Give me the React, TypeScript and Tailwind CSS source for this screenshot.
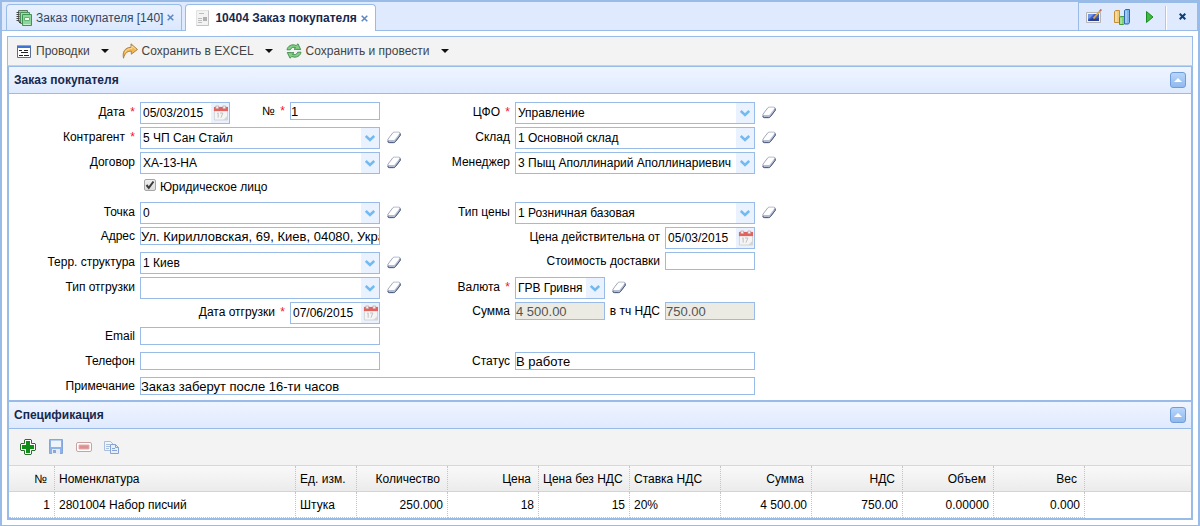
import React, {useId, useState} from 'react';
import clsx from 'clsx';

type ControlProps = {
  label: string;
  required?: boolean;
  labelClass?: string;
};

type Column = {
  title: string;
  value: string;
  width: string;
  align?: 'left' | 'right';
};

const COLUMNS: Column[] = [
  {title: '№', value: '1', width: 'w-[46px]', align: 'right'},
  {title: 'Номенклатура', value: '2801004 Набор писчий', width: 'w-[241px]'},
  {title: 'Ед. изм.', value: 'Штука', width: 'w-[61px]'},
  {title: 'Количество', value: '250.000', width: 'w-[91px]', align: 'right'},
  {title: 'Цена', value: '18', width: 'w-[91px]', align: 'right'},
  {title: 'Цена без НДС', value: '15', width: 'w-[91px]', align: 'right'},
  {title: 'Ставка НДС', value: '20%', width: 'w-[91px]'},
  {title: 'Сумма', value: '4 500.00', width: 'w-[91px]', align: 'right'},
  {title: 'НДС', value: '750.00', width: 'w-[91px]', align: 'right'},
  {title: 'Объем', value: '0.00000', width: 'w-[91px]', align: 'right'},
  {title: 'Вес', value: '0.000', width: 'w-[91px]', align: 'right'},
];

/* ---------- icons ---------- */

const Svg: React.FC<{children: React.ReactNode; className?: string}> = ({
  children,
  className = 'size-4',
}) => (
  <svg viewBox="0 0 16 16" className={clsx('shrink-0', className)} aria-hidden="true">
    {children}
  </svg>
);

const BooksIcon = () => (
  <Svg>
    <path d="M2.500 .5h9v11h-9z" fill="#a9c9b0" stroke="#5a7a62" />
    <path d="M4.500 2.500h9v11h-9z" fill="#a5dcae" stroke="#4d8f5b" />
    <path d="M6.500 4.500h9v11h-9z" fill="#8ed69a" stroke="#3f9453" />
    <path d="M8.500 7.500h5v3h-5z" fill="#f4fcf5" stroke="#62b572" />
    <path d="M7.500 14.500h7" stroke="#c6efcc" />
    <path d="M.5 2.500h3M.5 4.500h3M.5 6.500h3M.5 8.500h3M.5 10.500h3M3 12.500h2" stroke="#444" />
  </Svg>
);

const DocIcon = () => (
  <Svg>
    <path d="M1.500 .5h12v15h-12z" fill="#f3f3f3" stroke="#e2e2e2" />
    <path d="M1.500 15.500h12V.5" fill="none" stroke="#c4c4c4" />
    <path d="M4 3.500h5M3 8.500h4M3 10.500h4M3 12.500h4" stroke="#bdbdbd" />
    <path d="M8 7h4v4H8z" fill="#b0b0b0" />
  </Svg>
);

const FormIcon = () => (
  <Svg>
    <path d="M1.500 2.500h13v12h-13z" fill="#fff" stroke="#5b6f93" />
    <path d="M1 2h14v3H1z" fill="#3f74cf" />
    <path d="M1 2h14v1H1z" fill="#7ea7ea" />
    <path d="M3 7.500h3M8 7.500h4M5 9.500h7M3 12.500h4M8 12.500h5" stroke="#222" />
  </Svg>
);

const ExportIcon = () => (
  <Svg>
    <path
      d="M1.500 15.200C.2 9 2.800 4.500 9 4.300V.8L15.500 6.500 9.300 11.200V8.200C5.500 8 2.800 10 1.500 15.200z"
      fill="#f2b653"
      stroke="#a87a3c"
      strokeWidth=".9"
      strokeLinejoin="round"
    />
    <path d="M3 9.500C4.300 6.600 6.500 5.600 10 5.500V3l3.800 3.400" fill="none" stroke="#fbdc9c" />
  </Svg>
);

const RefreshIcon = () => (
  <Svg>
    <path
      d="M1 6.800C1.500 3 6 .6 10.200 2.500L12 .8l2.700 5.700-6.700-.2 1.700-1.600C7.500 3.700 5.200 4.500 4.300 6.800z"
      fill="#83cf86"
      stroke="#3d8a49"
      strokeWidth=".9"
      strokeLinejoin="round"
    />
    <path
      d="M15 9.200c-.5 3.800-5 6.200-9.200 4.300L4 15.200 1.300 9.500l6.700.2-1.700 1.600c2.200 1 4.500.2 5.400-2.100z"
      fill="#83cf86"
      stroke="#3d8a49"
      strokeWidth=".9"
      strokeLinejoin="round"
    />
  </Svg>
);

const PictureIcon = () => (
  <Svg>
    <path d="M.5 3.500h14v10H.5z" fill="#f4f4f4" stroke="#b5b5b5" />
    <path d="M2 5h11v7H2z" fill="#3d5fc4" />
    <path d="M2 5h6l-4 4-2 1z" fill="#7697e6" />
    <path d="M2 12l4-3 3 1 4-1v3z" fill="#2a3f91" />
    <path d="M7.500 9.500L14.500 1.500" stroke="#e3a43a" strokeWidth="1.800" />
    <path d="M14 2l1.300-1.500" stroke="#c06b5c" strokeWidth="1.800" />
  </Svg>
);

const ChartIcon = () => (
  <Svg>
    <path d="M.5 2.500l1-1h4v11l-1 1h-4z" fill="#f4cb78" stroke="#c48e34" />
    <path d="M5.500 8.500l1-1h4v7l-1 1h-4z" fill="#7fd374" stroke="#449c3d" />
    <path d="M10.500 1.500l1-1h4v13l-1 1.500h-4z" fill="#7db4ee" stroke="#2f69ad" />
    <path d="M2 3v10M7 9v6M12 2v12" stroke="#fff" strokeOpacity=".6" />
  </Svg>
);

const PlayIcon = () => (
  <Svg>
    <path d="M4.500 2.500v11L11 8z" fill="#3dbb3d" stroke="#1c8a24" strokeLinejoin="round" />
  </Svg>
);

const PlusIcon = () => (
  <Svg>
    <path
      d="M5 .5h6L11.500 1v3.500H15l.5.5v6l-.5.5h-3.500V15l-.5.5H5l-.5-.5v-3.500H1L.5 11V5L1 4.500h3.500V1z"
      fill="#fff"
      stroke="#2c6e2c"
    />
    <path d="M6 2h4v4h4v4h-4v4H6v-4H2V6h4z" fill="#0f8f16" />
  </Svg>
);

const DiskIcon = () => (
  <Svg>
    <path d="M1.500 .5h13v14h-13z" fill="#8fb2e8" stroke="#84a6dc" />
    <path d="M3 1h10v7H3z" fill="#eef4fc" />
    <path d="M3 1h10v1H3z" fill="#b9cfef" />
    <path d="M4 10h8v5H4z" fill="#e6ecf5" />
    <path d="M5 11h3v3H5z" fill="#8fa6cf" />
  </Svg>
);

const MinusIcon = () => (
  <Svg>
    <rect x=".5" y="3.500" width="15" height="9" rx="1.500" fill="#fff" stroke="#c9a3a3" />
    <path d="M3 6h10v4H3z" fill="#de9090" stroke="#e5aaaa" />
  </Svg>
);

const CopyIcon = () => (
  <Svg>
    <path d="M.5 2.500h6l3 3v6h-9z" fill="#f1f6fd" stroke="#a9bede" />
    <path d="M2 5.500h4M2 7.500h4M2 9.500h3" stroke="#a9bede" />
    <path d="M6.500 5.500h5l3 3v6h-8z" fill="#e8f0fb" stroke="#86a3d3" />
    <path d="M11.500 5.500v3h3M8 9.500h3M8 11.500h5" fill="none" stroke="#86a3d3" />
  </Svg>
);

const EraserIcon = () => (
  <svg viewBox="0 0 14 13" className="h-[13px] w-3.5" aria-hidden="true">
    <path
      d="M.9 8.300L5.700 1.900Q6.300 1.200 7.200 1.200h4.600q1.400 0 1.400 1.400v1.800L8.400 10.700q-.7.900-1.800.9H2.300Q.9 11.600.9 10.200z"
      fill="#b4bdd2"
      stroke="#8a95b0"
      strokeWidth=".8"
    />
    <path d="M1.400 8.300L6.200 2q.4-.5 1-.5h4.700q1 .1.500.9L7.800 8.500q-.5.600-1.300.6H2Q1.100 9 1.400 8.300z" fill="#fff" />
    <path
      d="M.9 10.200q0 1.400 1.400 1.400h4.300q1.100 0 1.800-.9l4.800-6.300V2.600"
      fill="none"
      stroke="#4c587a"
      strokeWidth="1"
    />
  </svg>
);

const CalendarIcon = () => (
  <Svg className="h-4 w-[15px]">
    <path d="M1.500 3.500h14v12h-14z" fill="#f5f5f5" stroke="#d2d2d2" />
    <path d="M1 1.500h15V6H1z" fill="#e2625e" />
    <path d="M3 .5h3v3H3zM10.500 .5h3v3h-3z" fill="#f2f2f2" stroke="#b88" strokeWidth=".6" />
    <path d="M4.500 8.500l1-.7V13M7.500 8h3L8.500 13" fill="none" stroke="#bdbdbd" />
    <path d="M11 15.500l4.500-4.500v4.500z" fill="#d5d5d5" />
  </Svg>
);

const CaretIcon = () => (
  <svg viewBox="0 0 8 4" className="h-1 w-2" aria-hidden="true">
    <path d="M0 0h8L4 4z" fill="#111" />
  </svg>
);

const CloseIcon: React.FC<{dark?: boolean}> = ({dark}) => (
  <svg viewBox="0 0 7 7" className="size-[7px]" aria-hidden="true">
    <path
      d="M.7 .7L6.300 6.300M6.300 .7L.7 6.300"
      stroke={dark ? '#0b3f7c' : '#5b86c4'}
      strokeWidth={dark ? 2 : 1.500}
    />
  </svg>
);

/* ---------- form controls ---------- */

const Label: React.FC<ControlProps & {htmlFor: string}> = ({
  label,
  required,
  labelClass,
  htmlFor,
}) => (
  <label
    htmlFor={htmlFor}
    className={clsx('pr-[5px] text-right leading-5 whitespace-nowrap', labelClass)}
  >
    {label}
    {required && <span className="pl-0.5 text-[#f0142f]"> *</span>}
  </label>
);

const TextField: React.FC<
  ControlProps & {value?: string; width: string; disabled?: boolean}
> = ({value = '', width, disabled, ...rest}) => {
  const id = useId();
  return (
    <>
      <Label {...rest} labelClass={clsx('leading-[18px]!', rest.labelClass)} htmlFor={id} />
      <input
        id={id}
        type="text"
        defaultValue={value}
        disabled={disabled}
        className={clsx(
          'h-[18px] border border-[#99bbe8] text-[13px] leading-4 outline-none',
          disabled ? 'bg-[#ebebe4] text-[#545454]' : 'bg-white',
          width
        )}
      />
    </>
  );
};

const DateField: React.FC<ControlProps & {value: string}> = ({value, ...rest}) => {
  const id = useId();
  return (
    <>
      <Label {...rest} htmlFor={id} />
      <div className="flex h-[22px] w-[90px] border border-[#99bbe8] bg-white">
        <input id={id} type="text" defaultValue={value} className="w-0 grow pl-0.5 outline-none" />
        <button
          type="button"
          aria-label="Календарь"
          className="flex w-[18px] items-center justify-center bg-[#ebf2ff]"
        >
          <CalendarIcon />
        </button>
      </div>
    </>
  );
};

const ComboField: React.FC<ControlProps & {value: string; width: string}> = ({
  value,
  width,
  ...rest
}) => {
  const id = useId();
  const [selected, setSelected] = useState(value);
  return (
    <>
      <Label {...rest} htmlFor={id} />
      <div className={clsx('relative h-[22px] border border-[#99bbe8] bg-white', width)}>
        <select
          id={id}
          value={selected}
          onChange={event => setSelected(event.target.value)}
          className="h-5 w-full appearance-none overflow-hidden pr-[18px] pl-0.5 leading-5 outline-none"
        >
          <option value={value}>{value}</option>
          {value !== '' && <option value="" />}
        </select>
        <span className="pointer-events-none absolute inset-y-0 right-0 flex w-[18px] items-center justify-center bg-[#ebf2ff]">
          <svg viewBox="0 0 10 7" className="h-[7px] w-2.5" aria-hidden="true">
            <path d="M.8 1L5 5l4.200-4" fill="none" stroke="#72baf0" strokeWidth="2.500" />
          </svg>
        </span>
      </div>
      <button
        type="button"
        aria-label="Очистить"
        onClick={() => setSelected('')}
        className="ml-[7px] flex h-5 w-3.5 items-center"
      >
        <EraserIcon />
      </button>
    </>
  );
};

const FormRow: React.FC<{left?: React.ReactNode; right?: React.ReactNode}> = ({
  left,
  right,
}) => (
  <div className="flex h-[22px] items-start">
    <div className="flex w-[392px] shrink-0 items-start">{left}</div>
    {right && <div className="flex items-start">{right}</div>}
  </div>
);

const PanelHeader: React.FC<{title: string; onToggle: () => void}> = ({title, onToggle}) => (
  <div className="flex h-[27px] items-center justify-between border-b border-[#99bbe8] bg-linear-to-b from-[#eff5ff] to-[#dfeafe] px-[5px]">
    <h2 className="font-bold text-[#15284f]">{title}</h2>
    <button
      type="button"
      aria-label="Свернуть"
      onClick={onToggle}
      className="flex size-4 items-center justify-center rounded-[3px] border border-[#6f9dd9] bg-linear-to-b from-[#b9d6fa] to-[#8fb9ee]"
    >
      <svg viewBox="0 0 8 4" className="h-1 w-2" aria-hidden="true">
        <path d="M0 4h8L4 0z" fill="#fff" />
      </svg>
    </button>
  </div>
);

const ToolbarButton: React.FC<{icon: React.ReactNode; text: string}> = ({icon, text}) => (
  <button type="button" className="flex items-center text-[#444]">
    {icon}
    <span className="pr-[11px] pl-1">{text}</span>
    <CaretIcon />
  </button>
);

const L = 'w-[131px]';
const R = 'w-[114px]';
const INNER = 'w-[60px]';

const App: React.FC = () => {
  const [orderOpen, setOrderOpen] = useState(true);
  const [specOpen, setSpecOpen] = useState(true);

  return (
    <div className="border-2 border-b border-[#99bbe8] bg-white font-['Liberation_Sans',Arial,sans-serif] text-[12px] leading-4 text-black">
      {/* tabs */}
      <div className="flex h-[29px] items-stretch border-b border-[#99bbe8] bg-[#dfeaff]">
        <div role="tablist" className="flex grow items-stretch gap-[3px] pt-0.5 pl-1">
          <div className="flex items-center rounded-t border border-b-0 border-[#99bbe8] bg-linear-to-b from-[#e9f1ff] to-[#dbe8fd] pr-[7px] pl-[9px]">
            <button type="button" role="tab" className="flex items-center gap-1 text-[#33465f]">
              <BooksIcon />
              Заказ покупателя [140]
            </button>
            <button type="button" aria-label="Закрыть" className="pl-1">
              <CloseIcon />
            </button>
          </div>
          <div className="-mb-px flex items-center rounded-t border border-b-0 border-[#99bbe8] bg-white pr-[7px] pl-[9px]">
            <button
              type="button"
              role="tab"
              aria-selected="true"
              className="flex items-center gap-1 font-bold text-[#15284f]"
            >
              <DocIcon />
              10404 Заказ покупателя
            </button>
            <button type="button" aria-label="Закрыть" className="pl-1">
              <CloseIcon />
            </button>
          </div>
        </div>
        <div className="flex items-center border border-b-0 border-[#99bbe8] pl-[7px]">
          <button type="button" aria-label="Оформление" className="pr-3">
            <PictureIcon />
          </button>
          <button type="button" aria-label="Отчеты" className="pr-3">
            <ChartIcon />
          </button>
          <button type="button" aria-label="Выполнить" className="pr-[7px]">
            <PlayIcon />
          </button>
          <span className="mt-0.5 h-6 w-0.5 border-r border-l border-r-white border-l-[#c4c4c4]" />
          <button type="button" aria-label="Закрыть окно" className="pr-[11px] pl-3">
            <CloseIcon dark />
          </button>
        </div>
      </div>

      <main className="p-[5px]">
        <div className="flex h-[30px] items-center gap-[13px] border border-[#99bbe8] border-b-[#d0d0d0] bg-[#f3f3f3] pl-2">
          <ToolbarButton icon={<FormIcon />} text="Проводки" />
          <ToolbarButton icon={<ExportIcon />} text="Сохранить в EXCEL" />
          <ToolbarButton icon={<RefreshIcon />} text="Сохранить и провести" />
        </div>

        <section className="border-x-2 border-t border-[#99bbe8]">
          <PanelHeader title="Заказ покупателя" onToggle={() => setOrderOpen(!orderOpen)} />
          {orderOpen && (
            <form className="flex flex-col gap-[3px] pt-2 pb-px">
              <FormRow
                left={
                  <>
                    <DateField label="Дата" required labelClass={L} value="05/03/2015" />
                    <TextField label="№" required labelClass={INNER} width="w-[90px]" value="1" />
                  </>
                }
                right={
                  <ComboField label="ЦФО" required labelClass={R} width="w-[240px]" value="Управление" />
                }
              />
              <FormRow
                left={
                  <ComboField
                    label="Контрагент"
                    required
                    labelClass={L}
                    width="w-[240px]"
                    value="5 ЧП Сан Стайл"
                  />
                }
                right={
                  <ComboField label="Склад" labelClass={R} width="w-[240px]" value="1 Основной склад" />
                }
              />
              <FormRow
                left={<ComboField label="Договор" labelClass={L} width="w-[240px]" value="ХА-13-НА" />}
                right={
                  <ComboField
                    label="Менеджер"
                    labelClass={R}
                    width="w-[240px]"
                    value="3 Пыщ Аполлинарий Аполлинариевич"
                  />
                }
              />
              <FormRow
                left={
                  <label className="ml-[135px] flex items-start gap-1 leading-5">
                    <input
                      type="checkbox"
                      defaultChecked
                      className="peer mt-0.5 size-3 appearance-none rounded-xs border border-[#a6a6a6] bg-linear-to-b from-[#f0f0f0] to-[#dcdcdc]"
                    />
                    <svg
                      viewBox="0 0 12 12"
                      className="pointer-events-none invisible mt-0.5 -ml-4 size-3 peer-checked:visible"
                      aria-hidden="true"
                    >
                      <path d="M2.500 6l2.300 2.800L9.500 2.500" fill="none" stroke="#3c3c3c" strokeWidth="2" />
                    </svg>
                    Юридическое лицо
                  </label>
                }
              />
              <FormRow
                left={<ComboField label="Точка" labelClass={L} width="w-[240px]" value="0" />}
                right={
                  <ComboField
                    label="Тип цены"
                    labelClass={R}
                    width="w-[240px]"
                    value="1 Розничная базовая"
                  />
                }
              />
              <FormRow
                left={
                  <TextField
                    label="Адрес"
                    labelClass={L}
                    width="w-[240px]"
                    value="Ул. Кирилловская, 69, Киев, 04080, Украина"
                  />
                }
                right={
                  <DateField label="Цена действительна от" labelClass="w-[264px]" value="05/03/2015" />
                }
              />
              <FormRow
                left={
                  <ComboField label="Терр. структура" labelClass={L} width="w-[240px]" value="1 Киев" />
                }
                right={<TextField label="Стоимость доставки" labelClass="w-[264px]" width="w-[90px]" />}
              />
              <FormRow
                left={<ComboField label="Тип отгрузки" labelClass={L} width="w-[240px]" value="" />}
                right={
                  <ComboField label="Валюта" required labelClass={R} width="w-[90px]" value="ГРВ Гривня" />
                }
              />
              <FormRow
                left={
                  <DateField label="Дата отгрузки" required labelClass="w-[281px]" value="07/06/2015" />
                }
                right={
                  <>
                    <TextField label="Сумма" labelClass={R} width="w-[90px]" value="4 500.00" disabled />
                    <TextField
                      label="в тч НДС"
                      labelClass={INNER}
                      width="w-[90px]"
                      value="750.00"
                      disabled
                    />
                  </>
                }
              />
              <FormRow left={<TextField label="Email" labelClass={L} width="w-[240px]" />} />
              <FormRow
                left={<TextField label="Телефон" labelClass={L} width="w-[240px]" />}
                right={<TextField label="Статус" labelClass={R} width="w-[240px]" value="В работе" />}
              />
              <div className="flex h-[22px] items-start">
                <TextField
                  label="Примечание"
                  labelClass={L}
                  width="w-[615px]"
                  value="Заказ заберут после 16-ти часов"
                />
              </div>
            </form>
          )}
        </section>

        <section className="border-2 border-[#99bbe8]">
          <PanelHeader title="Спецификация" onToggle={() => setSpecOpen(!specOpen)} />
          {specOpen && (
            <>
              <div className="flex h-[37px] items-center gap-3 border-b border-[#d8d8d8] bg-[#f3f3f3] pl-[11px]">
                <button type="button" aria-label="Добавить">
                  <PlusIcon />
                </button>
                <button type="button" aria-label="Сохранить">
                  <DiskIcon />
                </button>
                <button type="button" aria-label="Удалить">
                  <MinusIcon />
                </button>
                <button type="button" aria-label="Копировать">
                  <CopyIcon />
                </button>
              </div>
              <table className="w-full table-fixed border-separate border-spacing-0">
                <thead>
                  <tr className="h-[26px] bg-linear-to-b from-[#f9f9f9] to-[#ebebeb]">
                    {COLUMNS.map(column => (
                      <th
                        key={column.title}
                        className={clsx(
                          'border-r border-b border-r-[#c4c4c4] border-b-[#d4d4d4] pl-1 font-normal whitespace-nowrap [border-right-style:dotted]',
                          column.width,
                          column.align === 'right' ? 'pr-[7px] text-right' : 'text-left'
                        )}
                      >
                        {column.title}
                      </th>
                    ))}
                    <th className="border-b border-[#d4d4d4]" />
                  </tr>
                </thead>
                <tbody>
                  <tr className="h-[26px]">
                    {COLUMNS.map(column => (
                      <td
                        key={column.title}
                        className={clsx(
                          'border-r border-b border-dotted border-[#c4c4c4] pl-1 whitespace-nowrap',
                          column.align === 'right' && 'pr-1 text-right'
                        )}
                      >
                        {column.value}
                      </td>
                    ))}
                    <td />
                  </tr>
                </tbody>
              </table>
            </>
          )}
        </section>
      </main>
    </div>
  );
};

export default App;
